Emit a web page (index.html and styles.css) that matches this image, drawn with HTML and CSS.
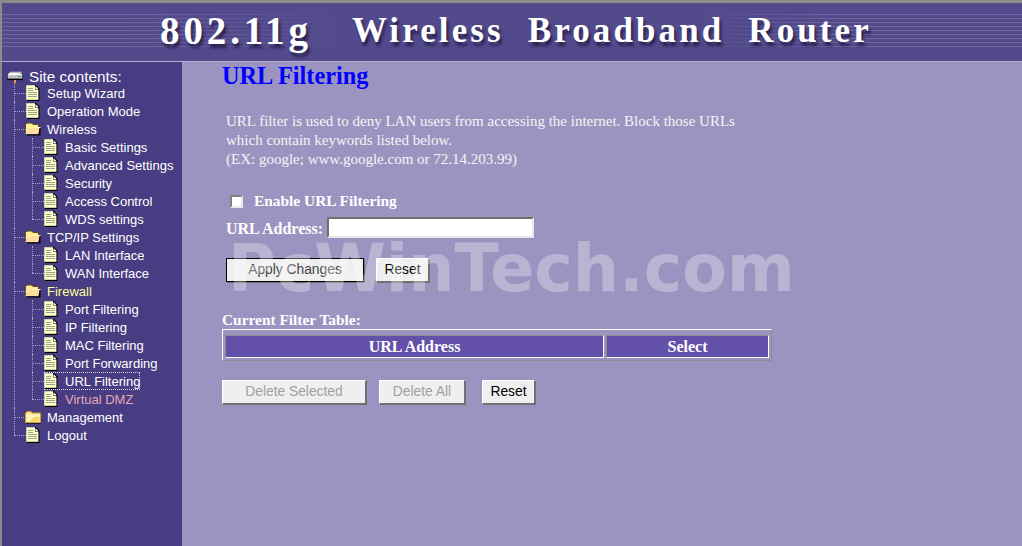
FILE: index.html
```html
<!DOCTYPE html>
<html lang="en">
<head>
  <meta charset="UTF-8" />
  <meta name="viewport" content="width=device-width, initial-scale=1.0"/>
  <title>URL Filtering | 802.11g Wireless Broadband Router</title>
  <link rel="stylesheet" href="styles.css">
</head>
<body>

<svg class="icon-defs" aria-hidden="true">
  <symbol id="doc" viewBox="0 0 14 16">
    <path d="M.5 .5H9L12.5 4V14.5H.5Z" fill="#ffffcc" stroke="#d0d0a8"/>
    <path d="M9 0H10L13.5 3.5V16H1V15H12.5V4.5H9Z" fill="#000"/>
    <path d="M9.5 1L12 3.5V4H9.5Z" fill="#fff"/>
    <path d="M2 3.5H7M2 5.5H7M2 7.5H11M2 9.5H11M2 11.5H11" stroke="#a0a088" fill="none"/>
  </symbol>
  <symbol id="folder-open" viewBox="0 0 16 14">
    <path d="M.5 11.5V2.5L2 1H6.5L8 2.5H13.5V11.5Z" fill="#ffee90" stroke="#5a4a20"/>
    <path d="M.5 12L2.5 5.5H15L13.5 12Z" fill="#ffdca0"/>
    <path d="M2.5 5.5H15.5" stroke="#fff4b0"/>
    <path d="M15.5 6V13.5H2V12.5H13.5L14.5 6Z" fill="#000"/>
  </symbol>
  <symbol id="folder" viewBox="0 0 16 14">
    <path d="M.5 12.5V3H1L2 1.5H6L7 3H15.5V12.5Z" fill="#ffe680" stroke="#c8a030"/>
    <path d="M1.5 4H14.5V11.5H1.5Z" fill="#fff2b0"/>
    <path d="M9 7H14.5V11.5H5Z" fill="#f6d070"/>
    <path d="M1 13.5H16" stroke="#201c40"/>
  </symbol>
  <symbol id="root" viewBox="0 0 16 12">
    <path d="M3 1H15L13 3.5H1Z" fill="#f0f0f0" stroke="#888"/>
    <path d="M1 3.5H15V7.5H1Z" fill="#c0c0c0"/>
    <path d="M1 3.5H15" stroke="#fff"/>
    <path d="M11 5.5H14" stroke="#3c3"/>
    <path d="M0 8.5H16" stroke="#000" stroke-width="1.2"/>
    <path d="M7 9H9V12H7Z" fill="#f0a000"/>
  </symbol>
</svg>

<!-- Banner -->
<header class="banner">
  <h1 class="banner-title">
    <span class="banner-model">802.11g</span>
    <span>Wireless</span>
    <span>Broadband</span>
    <span>Router</span>
  </h1>
</header>

<div class="page">

  <!-- Menu tree -->
  <nav class="sidebar">
    <div class="tree-root">
      <svg class="icon-root"><use href="#root"/></svg>
      <span>Site contents:</span>
    </div>
    <ul class="tree">
      <li><a class="node"><svg class="icon-doc"><use href="#doc"/></svg>Setup Wizard</a></li>
      <li><a class="node"><svg class="icon-doc"><use href="#doc"/></svg>Operation Mode</a></li>
      <li>
        <a class="node"><svg class="icon-folder"><use href="#folder-open"/></svg>Wireless</a>
        <ul>
          <li><a class="node"><svg class="icon-doc"><use href="#doc"/></svg>Basic Settings</a></li>
          <li><a class="node"><svg class="icon-doc"><use href="#doc"/></svg>Advanced Settings</a></li>
          <li><a class="node"><svg class="icon-doc"><use href="#doc"/></svg>Security</a></li>
          <li><a class="node"><svg class="icon-doc"><use href="#doc"/></svg>Access Control</a></li>
          <li><a class="node"><svg class="icon-doc"><use href="#doc"/></svg>WDS settings</a></li>
        </ul>
      </li>
      <li>
        <a class="node"><svg class="icon-folder"><use href="#folder-open"/></svg>TCP/IP Settings</a>
        <ul>
          <li><a class="node"><svg class="icon-doc"><use href="#doc"/></svg>LAN Interface</a></li>
          <li><a class="node"><svg class="icon-doc"><use href="#doc"/></svg>WAN Interface</a></li>
        </ul>
      </li>
      <li>
        <a class="node node-open"><svg class="icon-folder"><use href="#folder-open"/></svg>Firewall</a>
        <ul>
          <li><a class="node"><svg class="icon-doc"><use href="#doc"/></svg>Port Filtering</a></li>
          <li><a class="node"><svg class="icon-doc"><use href="#doc"/></svg>IP Filtering</a></li>
          <li><a class="node"><svg class="icon-doc"><use href="#doc"/></svg>MAC Filtering</a></li>
          <li><a class="node"><svg class="icon-doc"><use href="#doc"/></svg>Port Forwarding</a></li>
          <li><a class="node node-active"><svg class="icon-doc"><use href="#doc"/></svg>URL Filtering</a></li>
          <li><a class="node node-visited"><svg class="icon-doc"><use href="#doc"/></svg>Virtual DMZ</a></li>
        </ul>
      </li>
      <li><a class="node"><svg class="icon-folder"><use href="#folder"/></svg>Management</a></li>
      <li><a class="node"><svg class="icon-doc"><use href="#doc"/></svg>Logout</a></li>
    </ul>
  </nav>

  <!-- URL Filtering page -->
  <main class="content">
    <h2 class="page-title">URL Filtering</h2>
    <p class="intro">URL filter is used to deny LAN users from accessing the internet. Block those URLs<br>which contain keywords listed below.<br>(EX: google; www.google.com or 72.14.203.99)</p>

    <label class="enable-row">
      <input type="checkbox" class="check">
      <b>Enable URL Filtering</b>
    </label>

    <div class="url-row">
      <b>URL Address:</b>
      <input type="text" class="text-input">
    </div>

    <div class="button-row apply-row">
      <button class="btn btn-focus">Apply Changes</button>
      <button class="btn btn-reset">Reset</button>
    </div>

    <div class="table-title">Current Filter Table:</div>
    <div class="table-box">
      <table class="filter-table">
        <tr>
          <th class="col-url">URL Address</th>
          <th class="col-select">Select</th>
        </tr>
      </table>
    </div>

    <div class="button-row delete-row">
      <button class="btn btn-delete" disabled>Delete Selected</button>
      <button class="btn btn-delete-all" disabled>Delete All</button>
      <button class="btn btn-reset">Reset</button>
    </div>

    <div class="watermark">PcWinTech.com</div>
  </main>
</div>

</body>
</html>
```

FILE: styles.css
```css
:root {
  --banner: #534a8c;
  --side: #483c82;
  --main: #9c94c0;
  --cell: #6350a8;
  --frame: #8c8c8c;
}

* {
  box-sizing: border-box;
}

html, body {
  height: 100%;
}

body {
  margin: 0;
  overflow: hidden;
  background-color: var(--main);
  color: #fff;
  font-family: "Liberation Serif", serif;
  font-size: 16px;
}

.icon-defs {
  display: none;
}

/* banner */
.banner {
  height: 62px;
  border-top: 3px solid var(--frame);
  border-left: 2px solid var(--frame);
  border-bottom: 1px solid #b4aed2;
  background-color: var(--banner);
  background-image:
    linear-gradient(to right, transparent 12%, var(--banner) 34%, var(--banner) 68%, transparent 82%),
    repeating-linear-gradient(to bottom, rgba(255, 255, 255, 0.16) 0 1px, transparent 1px 4px);
  background-size: 100% 100%, 100% 36px;
  background-position: 0 0, 0 11px;
  background-repeat: no-repeat;
}

.banner-title {
  display: flex;
  gap: 24px;
  margin: 0;
  padding-left: 158px;
  font-size: 35px;
  line-height: 55px;
  font-weight: bold;
  letter-spacing: 3.1px;
  white-space: nowrap;
  text-shadow: 2px 4px 3px rgba(25, 20, 60, 0.75);
}

.banner-model {
  margin-right: 16px;
  font-size: 39px;
  letter-spacing: 3.9px;
}

.page {
  display: flex;
  height: calc(100% - 62px);
}

/* menu tree */
.sidebar {
  flex: 0 0 182px;
  border-left: 2px solid var(--frame);
  background-color: var(--side);
  padding-top: 7px;
  font-family: "Liberation Sans", Arial, sans-serif;
  font-size: 13px;
}

.tree-root {
  display: flex;
  align-items: center;
  gap: 6px;
  height: 15px;
  padding-left: 5px;
  font-size: 15.3px;
}

.icon-root {
  width: 16px;
  height: 12px;
}

.tree, .tree ul {
  list-style: none;
  margin: 0;
  padding: 0;
}

.tree {
  margin-left: 12px;
}

.tree ul {
  margin-left: 6px;
}

.tree li {
  position: relative;
  padding-left: 12px;
}

.tree li::before {
  content: "";
  position: absolute;
  left: 0;
  top: 9px;
  width: 12px;
  border-top: 1px dotted #a8a4c8;
}

.tree li::after {
  content: "";
  position: absolute;
  left: 0;
  top: 0;
  bottom: 0;
  border-left: 1px dotted #a8a4c8;
}

.tree > li:first-child::after {
  top: -4px;
}

.tree li:last-child::after {
  bottom: auto;
  height: 9px;
}

.node {
  display: flex;
  align-items: center;
  height: 18px;
  white-space: nowrap;
  color: #fff;
}

.node-open {
  color: #ffff99;
}

.node-visited {
  color: #e4a8b4;
}

.node-active {
  width: fit-content;
  outline: 1px dotted #ddd;
  outline-offset: -1px;
}

.icon-doc {
  flex: none;
  width: 14px;
  height: 16px;
  margin-right: 7px;
}

.icon-folder {
  flex: none;
  width: 16px;
  height: 14px;
  margin-left: -1px;
  margin-right: 6px;
}

/* main area */
.content {
  position: relative;
  flex: 1;
  padding-left: 40px;
}

.page-title {
  margin: 0;
  height: 27px;
  color: #0000ff;
  font-size: 24.3px;
  line-height: 27px;
}

.intro {
  margin: 23px 0 0 4px;
  font-size: 15px;
  line-height: 19px;
  color: #f4f4f4;
}

.enable-row {
  display: flex;
  align-items: center;
  margin: 22px 0 0 8px;
  height: 20px;
  font-size: 15.4px;
}

.check {
  appearance: none;
  width: 13px;
  height: 13px;
  margin: 0 11px 0 0;
  background: #fff;
  border: 2px solid;
  border-color: #808080 #e8e8e8 #e8e8e8 #808080;
}

.url-row {
  display: flex;
  align-items: center;
  gap: 4px;
  margin: 6px 0 0 4px;
  height: 23px;
}

.text-input {
  align-self: flex-start;
  width: 207px;
  height: 21px;
  border: 2px solid;
  border-color: #707070 #e8e8e8 #e8e8e8 #707070;
  background: #fff;
}

.button-row {
  display: flex;
}

.apply-row {
  gap: 12px;
  margin: 18px 0 0 4px;
}

.btn {
  height: 24px;
  padding: 0 6px 2px;
  background-color: #efefef;
  color: #000;
  border: 1px solid;
  border-color: #fff #707070 #707070 #fff;
  box-shadow: 1px 1px 0 #707070;
  font-family: "Liberation Sans", Arial, sans-serif;
  font-size: 13.8px;
}

.btn-focus {
  width: 138px;
  border-color: #000;
  color: #444;
}

.btn:disabled {
  color: #a0a0a0;
}

.btn-delete {
  width: 144px;
}

.btn-delete-all {
  width: 86px;
  margin-left: 13px;
  margin-right: 17px;
}

.btn-reset {
  width: 53px;
}

.table-title {
  margin-top: 29px;
  height: 18px;
  line-height: 17px;
  font-size: 15.4px;
  font-weight: bold;
}

.table-box {
  width: 550px;
  height: 32px;
  padding-top: 3px;
  border: 1px solid;
  border-color: #fff var(--frame) var(--frame) #fff;
}

.filter-table {
  width: 548px;
  border-collapse: separate;
  border-spacing: 2px;
}

.filter-table th {
  padding: 1px 0 0;
  height: 23px;
  background-color: var(--cell);
  border: 1px solid;
  border-color: var(--frame) #fff #fff var(--frame);
  font-size: 16px;
}

.col-url {
  width: 379px;
}

.delete-row {
  margin-top: 19px;
}

/* watermark sits over the form */
.watermark {
  position: absolute;
  left: 46px;
  top: 167px;
  color: rgba(255, 255, 255, 0.3);
  font-family: "DejaVu Sans", sans-serif;
  font-size: 65px;
  font-weight: bold;
  line-height: 80px;
  white-space: nowrap;
  pointer-events: none;
}
```
